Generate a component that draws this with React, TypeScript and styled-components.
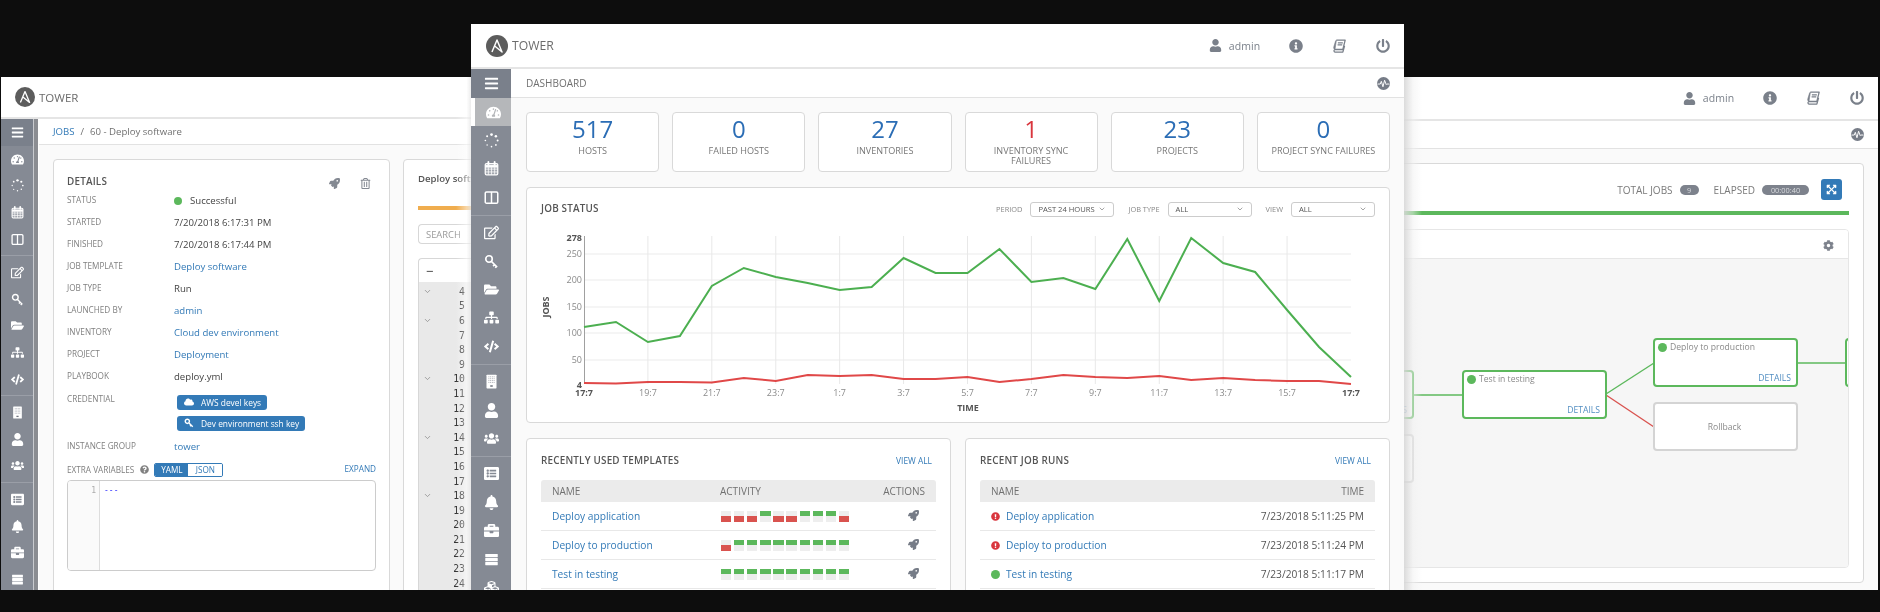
import React from 'react'
import styled, { createGlobalStyle } from 'styled-components'
import { ChevronDown } from 'lucide-react'
import {
  FaBars,
  FaBell,
  FaBriefcase,
  FaCloud,
  FaCode,
  FaCog,
  FaCubes,
  FaExclamationCircle,
  FaExpandArrowsAlt,
  FaFolderOpen,
  FaInfoCircle,
  FaListAlt,
  FaPowerOff,
  FaQuestionCircle,
  FaRegEdit,
  FaRegTrashAlt,
  FaRocket,
  FaSitemap,
  FaTachometerAlt,
  FaUser,
  FaUsers,
} from 'react-icons/fa'

const GlobalStyle = createGlobalStyle`
  html, body { margin: 0; padding: 0; background: #0d0d0d; }
  * { box-sizing: border-box; }
  body { font-family: "Open Sans", "Liberation Sans", sans-serif; }
`

const BLUE = '#337ab7'
const GREEN = '#5cb85c'
const RED = '#d9534f'

const Stage = styled.div`
  position: relative;
  width: 1880px;
  height: 612px;
  overflow: hidden;
  background: #0d0d0d;
  filter: blur(0.5px);
`

const Window = styled.section<{ $x: number; $y: number; $w: number; $h: number }>`
  position: absolute;
  left: ${(p) => p.$x}px;
  top: ${(p) => p.$y}px;
  width: ${(p) => p.$w}px;
  height: ${(p) => p.$h}px;
  overflow: hidden;
  display: flex;
  flex-direction: column;
  background: #fafafa;
`

const FadeLeft = styled.div`
  position: absolute;
  left: 456px;
  top: 77px;
  width: 15px;
  height: 513px;
  background: linear-gradient(to right, rgba(255, 255, 255, 0), rgba(255, 255, 255, 0.5) 70%, rgba(232, 232, 232, 0.8));
`

const FadeRight = styled.div`
  position: absolute;
  left: 1404px;
  top: 77px;
  width: 18px;
  height: 513px;
  background: linear-gradient(to right, rgba(215, 215, 215, 0.9), rgba(240, 240, 240, 0.5) 50%, rgba(255, 255, 255, 0));
`

const TopBar = styled.header<{ $h: number; $pad: number }>`
  flex: none;
  height: ${(p) => p.$h}px;
  display: flex;
  align-items: center;
  justify-content: space-between;
  padding: 0 14px 0 ${(p) => p.$pad}px;
  background: #fff;
  border-bottom: 2px solid #e5e5e5;
`

const Brand = styled.div<{ $size: number }>`
  display: flex;
  align-items: center;
  gap: 4px;
  font-size: ${(p) => p.$size}px;
  color: #6b6b6b;
`

const UserActions = styled.nav`
  display: flex;
  align-items: center;
  gap: 29px;
  color: #7a808a;
`

const UserName = styled.span`
  display: flex;
  align-items: center;
  gap: 7px;
  font-size: 10.5px;
  letter-spacing: 0.1px;
`

const ActionIcon = styled.span<{ $size: number }>`
  display: flex;
  font-size: ${(p) => p.$size}px;
`

const Body = styled.div`
  flex: 1;
  min-height: 0;
  display: flex;
`

const Sidebar = styled.aside<{ $w: number; $item: number; $icon: number }>`
  flex: none;
  width: ${(p) => p.$w}px;
  background: #858a94;
  color: #fff;
  font-size: ${(p) => p.$icon}px;
  --item: ${(p) => p.$item}px;
`

const MenuButton = styled.div<{ $h: number }>`
  height: ${(p) => p.$h}px;
  display: flex;
  align-items: center;
  justify-content: center;
  background: #7a808b;
`

const SideGroup = styled.div`
  padding-bottom: 3px;
  margin-bottom: 3px;
  border-bottom: 1px solid #9a9ea7;
  &:last-child {
    border-bottom: 0;
  }
`

const SideItem = styled.div<{ $active?: boolean }>`
  height: var(--item);
  display: flex;
  align-items: center;
  justify-content: center;
  background: ${(p) => (p.$active ? '#b5b7ba' : 'transparent')};
  border-left: ${(p) => (p.$active ? '4px solid #fff' : '0')};
`

const Rail = styled.div`
  flex: none;
  width: 6px;
  border-left: 1px solid #c9cbcf;
  border-right: 1px solid #fff;
  background: #8b8d92;
`

const Main = styled.main`
  flex: 1;
  min-width: 0;
  display: flex;
  flex-direction: column;
`

const CrumbBar = styled.div<{ $h: number; $pad: number }>`
  flex: none;
  height: ${(p) => p.$h}px;
  display: flex;
  align-items: center;
  justify-content: space-between;
  gap: 5px;
  padding: 0 14px 0 ${(p) => p.$pad}px;
  background: #fff;
  border-bottom: 1px solid #e2e2e2;
  font-size: 10px;
  color: #707070;
`

const Crumbs = styled.div`
  display: flex;
  gap: 6px;
  font-size: 9.6px;
`

const CrumbLink = styled.span`
  color: ${BLUE};
`

const Content = styled.div`
  flex: 1;
  min-height: 0;
  padding: 14px 14px 0 15px;
  display: flex;
  flex-direction: column;
  gap: 15px;
`

const Card = styled.div`
  background: #fff;
  border: 1px solid #d9d9d9;
  border-radius: 4px;
`

/* ---- icons drawn by hand ---- */

const AnsibleLogo = ({ size }: { size: number }) => (
  <svg width={size} height={size} viewBox="0 0 24 24">
    <circle cx="12" cy="12" r="12" fill="#5c5c5c" />
    <path d="M6.5 18.5 12 5.5l5.5 13-8-6.5" fill="none" stroke="#fff" strokeWidth="1.6" strokeLinejoin="round" />
  </svg>
)

const PulseIcon = ({ size }: { size: number }) => (
  <svg width={size} height={size} viewBox="0 0 24 24">
    <circle cx="12" cy="12" r="12" fill="#767c87" />
    <path d="M1 13h5l2-5 3 10 3-12 3 8 1-1h5" fill="none" stroke="#fff" strokeWidth="1.8" />
  </svg>
)

const BookIcon = () => (
  <svg width="1.05em" height="1em" viewBox="0 0 24 24" fill="none" stroke="currentColor">
    <path d="M7 2h15l-4 16H4.5a2.4 2.4 0 0 0 0 4.6H18l3-11" strokeWidth="2.2" strokeLinejoin="round" />
    <path d="M4.5 18C2 17 2 15 2.6 13L5.5 3.5C6 2.6 6.4 2 7 2z" fill="currentColor" strokeWidth="1" />
    <path d="M9.5 6.5h8.5M9 10h8" strokeWidth="2" />
  </svg>
)

const DotsIcon = () => (
  <svg width="1em" height="1em" viewBox="0 0 24 24" fill="#fff">
    <circle cx="12" cy="2.5" r="2.2" />
    <circle cx="19" cy="5" r="2" />
    <circle cx="21.8" cy="12" r="1.6" />
    <circle cx="19" cy="19" r="1.4" />
    <circle cx="12" cy="21.8" r="1.3" />
    <circle cx="5" cy="19" r="1.2" />
    <circle cx="2.2" cy="12" r="1.3" />
    <circle cx="5" cy="5" r="1.6" />
  </svg>
)

const CalendarIcon = () => (
  <svg width="1em" height="1em" viewBox="0 0 24 24" fill="none" stroke="#fff">
    <rect x="2" y="4" width="20" height="18" rx="2" fill="#fff" fillOpacity="0.25" strokeWidth="2" />
    <path d="M2 8.5h20" strokeWidth="4" />
    <path d="M7 1.5v4M17 1.5v4" strokeWidth="3" strokeLinecap="round" />
    <path d="M2 13h20M2 17.5h20M7 10v12M12 10v12M17 10v12" strokeWidth="1.2" />
  </svg>
)

const ColumnsIcon = () => (
  <svg width="1em" height="1em" viewBox="0 0 24 24" fill="none" stroke="#fff" strokeWidth="2.4">
    <rect x="2" y="3" width="20" height="18" rx="2" />
    <path d="M12 3v18" />
  </svg>
)

const KeyIcon = () => (
  <svg width="1em" height="1em" viewBox="0 0 24 24" fill="none" stroke="#fff" strokeWidth="2.6">
    <circle cx="8" cy="8" r="5.2" />
    <path d="M12 12l9 9M17 17l-2.5 2.5M20 20l-2 2" />
  </svg>
)

const InventoryIcon = () => (
  <svg width="1em" height="1em" viewBox="0 0 24 24">
    <rect x="4" y="1" width="16" height="22" rx="1" fill="#fff" />
    <path d="M7 4.5h10M7 7.5h10M7 10.5h10M7 13.5h10" stroke="#b0b3b9" strokeWidth="1.6" strokeDasharray="1.6 1.2" />
    <rect x="10" y="18" width="4" height="2.4" fill="#6f747e" />
  </svg>
)

const SmallKeyIcon = () => (
  <svg width="10" height="10" viewBox="0 0 24 24" fill="none" stroke="#fff" strokeWidth="3.4">
    <circle cx="8" cy="8" r="5" />
    <path d="M12 12l9 9M17 17l-2.5 2.5" />
  </svg>
)

const ServerIcon = () => (
  <svg width="1em" height="1em" viewBox="0 0 24 24" fill="#fff">
    <rect x="2" y="3" width="20" height="5.2" rx="0.6" />
    <rect x="2" y="9.4" width="20" height="5.2" rx="0.6" />
    <rect x="2" y="15.8" width="20" height="5.2" rx="0.6" />
  </svg>
)

const sideGroups: React.ReactNode[][] = [
  [<FaTachometerAlt />, <DotsIcon />, <CalendarIcon />, <ColumnsIcon />],
  [<FaRegEdit />, <KeyIcon />, <FaFolderOpen />, <FaSitemap />, <FaCode />],
  [<InventoryIcon />, <FaUser />, <FaUsers />],
  [<FaListAlt />, <FaBell />, <FaBriefcase />, <ServerIcon />, <FaCubes />],
]

const SideNav = ({
  w,
  item,
  icon,
  menu,
  activeFirst,
}: {
  w: number
  item: number
  icon: number
  menu: number
  activeFirst?: boolean
}) => (
  <Sidebar $w={w} $item={item} $icon={icon}>
    <MenuButton $h={menu}>
      <FaBars />
    </MenuButton>
    {sideGroups.map((group, g) => (
      <SideGroup key={g}>
        {group.map((glyph, i) => (
          <SideItem key={i} $active={activeFirst && g === 0 && i === 0}>
            {glyph}
          </SideItem>
        ))}
      </SideGroup>
    ))}
  </Sidebar>
)

const Header = ({ h, logo, brand, pad, icon }: { h: number; logo: number; brand: number; pad: number; icon: number }) => (
  <TopBar $h={h} $pad={pad}>
    <Brand $size={brand}>
      <AnsibleLogo size={logo} />
      TOWER
    </Brand>
    <UserActions>
      <UserName>
        <FaUser size={icon - 1} />
        admin
      </UserName>
      <ActionIcon $size={icon}>
        <FaInfoCircle />
      </ActionIcon>
      <ActionIcon $size={icon}>
        <BookIcon />
      </ActionIcon>
      <ActionIcon $size={icon}>
        <FaPowerOff />
      </ActionIcon>
    </UserActions>
  </TopBar>
)

/* ---- job details window ---- */

const DetailColumns = styled.div`
  flex: 1;
  min-height: 0;
  display: flex;
  gap: 13px;
  padding: 14px 0 0 14px;
`

const DetailsCard = styled(Card)`
  flex: none;
  width: 337px;
  height: 480px;
  padding: 13px 13px 0 13px;
`

const DetailsHead = styled.div`
  height: 16.5px;
  display: flex;
  align-items: center;
  justify-content: space-between;
  padding-right: 5px;
`

const Title = styled.h3`
  margin: 0;
  font-size: 9.9px;
  font-weight: 600;
  color: #555;
  letter-spacing: 0.2px;
`

const HeadIcons = styled.div`
  display: flex;
  align-items: center;
  gap: 20px;
  padding-top: 4px;
  font-size: 11px;
  color: #848992;
`

const DetailRow = styled.div`
  height: 22px;
  display: grid;
  grid-template-columns: 107px 1fr;
  align-items: center;
`

const DetailLabel = styled.span`
  font-size: 8.2px;
  color: #808080;
  padding-bottom: 2px;
`

const DetailValue = styled.span<{ $link?: boolean }>`
  display: flex;
  align-items: center;
  gap: 8px;
  font-size: 9.6px;
  color: ${(p) => (p.$link ? BLUE : '#444')};
`

const StatusDot = styled.i<{ $size?: number }>`
  flex: none;
  width: ${(p) => p.$size ?? 8}px;
  height: ${(p) => p.$size ?? 8}px;
  border-radius: 50%;
  background: ${GREEN};
`

const CredentialRow = styled.div`
  display: grid;
  grid-template-columns: 107px 1fr;
  align-items: start;
  padding: 7px 0 5px;
`

const CredentialLabel = styled(DetailLabel)`
  padding: 0;
  margin-top: -2px;
`

const Pills = styled.div`
  display: flex;
  flex-direction: column;
  align-items: flex-start;
  gap: 6px;
  padding-left: 3px;
`

const Pill = styled.span`
  height: 15px;
  display: flex;
  align-items: center;
  gap: 7px;
  padding: 0 6px 0 7px;
  border-radius: 3px;
  background: ${BLUE};
  color: #fff;
  font-size: 8.4px;
`

const ExtraRow = styled.div`
  height: 14px;
  margin-top: 5px;
  display: flex;
  align-items: center;
  font-size: 8.2px;
  color: #808080;
`

const HelpIcon = styled(FaQuestionCircle)`
  margin: 0 5px 0 6px;
  font-size: 9px;
`

const Toggle = styled.div`
  display: flex;
  height: 14px;
  border: 1px solid ${BLUE};
  border-radius: 2px;
  overflow: hidden;
`

const ToggleOption = styled.span<{ $on?: boolean }>`
  width: ${(p) => (p.$on ? 33 : 34)}px;
  display: flex;
  align-items: center;
  justify-content: center;
  font-size: 8.2px;
  background: ${(p) => (p.$on ? BLUE : '#fff')};
  color: ${(p) => (p.$on ? '#fff' : BLUE)};
`

const Expand = styled.span`
  margin-left: auto;
  padding-bottom: 3px;
  color: ${BLUE};
`

const Editor = styled.div`
  height: 91px;
  margin-top: 3px;
  display: flex;
  border: 1px solid #ccc;
  border-radius: 4px;
  overflow: hidden;
  font-family: "DejaVu Sans Mono", monospace;
  font-size: 8px;
`

const EditorGutter = styled.div`
  width: 32px;
  padding: 5px 3px 0 0;
  text-align: right;
  color: #aaa;
  background: #fafafa;
  border-right: 1px solid #ddd;
`

const EditorCode = styled.div`
  padding: 5px 0 0 4px;
  color: #2a2aff;
`

const OutputCard = styled(Card)`
  flex: 1;
  height: 480px;
  padding: 12px 0 0 14px;
`

const OutputTitle = styled.div`
  height: 14px;
  font-size: 9.6px;
  font-weight: 600;
  color: #555;
  white-space: nowrap;
`

const ProgressBar = styled.div<{ $color: string }>`
  height: 4px;
  background: ${(p) => p.$color};
`

const OrangeBar = styled(ProgressBar)`
  margin: 20px 0 14px;
`

const SearchBox = styled.div`
  height: 20px;
  display: flex;
  align-items: center;
  padding-left: 7px;
  border: 1px solid #d7d7d7;
  border-radius: 4px 0 0 4px;
  border-right: 0;
  font-size: 9.4px;
  color: #9a9a9a;
`

const CodeBox = styled.div`
  margin-top: 14px;
  border: 1px solid #d7d7d7;
  border-right: 0;
  border-radius: 4px 0 0 0;
`

const CodeHead = styled.div`
  height: 23px;
  display: flex;
  align-items: center;
  padding-left: 7px;
  font-size: 13px;
  font-weight: 600;
  color: #666;
`

const CodeLines = styled.div`
  padding-top: 2px;
  background: #e9e9e9;
`

const CodeLine = styled.div`
  height: 14.6px;
  display: grid;
  grid-template-columns: 17px 29px;
  align-items: center;
  font-family: "DejaVu Sans Mono", monospace;
  font-size: 9.8px;
  color: #333;
  text-align: right;
  svg {
    margin-left: 4px;
    color: #888;
  }
`

const JobWindow = () => {
  const rows: [string, string, boolean?][] = [
    ['STARTED', '7/20/2018 6:17:31 PM'],
    ['FINISHED', '7/20/2018 6:17:44 PM'],
    ['JOB TEMPLATE', 'Deploy software', true],
    ['JOB TYPE', 'Run'],
    ['LAUNCHED BY', 'admin', true],
    ['INVENTORY', 'Cloud dev environment', true],
    ['PROJECT', 'Deployment', true],
    ['PLAYBOOK', 'deploy.yml'],
  ]
  const lines = Array.from({ length: 21 }, (_, i) => i + 4)
  const folds = [4, 6, 10, 14, 18]
  return (
    <Window $x={1} $y={77} $w={934} $h={513}>
      <Header h={42} logo={20} brand={11.5} pad={14} icon={13} />
      <Body>
        <SideNav w={32} item={26.6} icon={13} menu={27} />
        <Rail />
        <Main>
          <CrumbBar $h={26} $pad={14}>
            <Crumbs>
              <CrumbLink>JOBS</CrumbLink>
              <span>/</span>
              <span>60 - Deploy software</span>
            </Crumbs>
          </CrumbBar>
          <DetailColumns>
            <DetailsCard>
              <DetailsHead>
                <Title>DETAILS</Title>
                <HeadIcons>
                  <FaRocket />
                  <FaRegTrashAlt />
                </HeadIcons>
              </DetailsHead>
              <DetailRow>
                <DetailLabel>STATUS</DetailLabel>
                <DetailValue>
                  <StatusDot />
                  Successful
                </DetailValue>
              </DetailRow>
              {rows.map(([label, value, link]) => (
                <DetailRow key={label}>
                  <DetailLabel>{label}</DetailLabel>
                  <DetailValue $link={link}>{value}</DetailValue>
                </DetailRow>
              ))}
              <CredentialRow>
                <CredentialLabel>CREDENTIAL</CredentialLabel>
                <Pills>
                  <Pill>
                    <FaCloud size={10} />
                    AWS devel keys
                  </Pill>
                  <Pill>
                    <SmallKeyIcon />
                    Dev environment ssh key
                  </Pill>
                </Pills>
              </CredentialRow>
              <DetailRow>
                <DetailLabel>INSTANCE GROUP</DetailLabel>
                <DetailValue $link>tower</DetailValue>
              </DetailRow>
              <ExtraRow>
                EXTRA VARIABLES
                <HelpIcon />
                <Toggle>
                  <ToggleOption $on>YAML</ToggleOption>
                  <ToggleOption>JSON</ToggleOption>
                </Toggle>
                <Expand>EXPAND</Expand>
              </ExtraRow>
              <Editor>
                <EditorGutter>1</EditorGutter>
                <EditorCode>---</EditorCode>
              </Editor>
            </DetailsCard>
            <OutputCard>
              <OutputTitle>Deploy software</OutputTitle>
              <OrangeBar $color="#f0ad4e" />
              <SearchBox>SEARCH</SearchBox>
              <CodeBox>
                <CodeHead>−</CodeHead>
                <CodeLines>
                  {lines.map((n) => (
                    <CodeLine key={n}>
                      {folds.includes(n) ? <ChevronDown size={9} /> : <span />}
                      <span>{n}</span>
                    </CodeLine>
                  ))}
                </CodeLines>
              </CodeBox>
            </OutputCard>
          </DetailColumns>
        </Main>
      </Body>
    </Window>
  )
}

/* ---- workflow window ---- */

const WorkflowPanel = styled(Card)`
  height: 420px;
  padding: 0 14px 0 15px;
  display: flex;
  flex-direction: column;
`

const WorkflowTop = styled.div`
  flex: none;
  height: 47px;
  display: flex;
  align-items: center;
  justify-content: flex-end;
  gap: 15px;
  padding: 4px 7px 0 0;
  font-size: 10px;
  color: #7a7a7a;
`

const Counter = styled.span`
  display: flex;
  align-items: center;
  gap: 7px;
`

const Badge = styled.span<{ $w: number }>`
  width: ${(p) => p.$w}px;
  height: 10px;
  display: flex;
  align-items: center;
  justify-content: center;
  border-radius: 5px;
  background: #7d828c;
  color: #d8dade;
  font-size: 7.4px;
`

const FullscreenButton = styled.span`
  width: 21px;
  height: 21px;
  margin-left: -3px;
  display: flex;
  align-items: center;
  justify-content: center;
  border-radius: 3px;
  background: ${BLUE};
  color: #fff;
  font-size: 11px;
`

const GraphPanel = styled.div`
  flex: none;
  height: 339px;
  margin-top: 14px;
  display: flex;
  flex-direction: column;
  border: 1px solid #e6e6e6;
  border-radius: 4px;
  overflow: hidden;
`

const GraphToolbar = styled.div`
  flex: none;
  height: 29px;
  display: flex;
  align-items: center;
  justify-content: flex-end;
  padding: 2px 14px 0 0;
  background: #fff;
  border-bottom: 1px solid #e6e6e6;
  color: #7d828c;
  font-size: 11px;
`

const GraphCanvas = styled.div`
  position: relative;
  flex: 1;
  background: #f6f6f6;
  overflow: hidden;
`

const GraphEdges = styled.svg`
  position: absolute;
  left: 0;
  top: 0;
  width: 100%;
  height: 100%;
`

const NodeBox = styled.div<{ $x: number; $y: number; $ok?: boolean }>`
  position: absolute;
  left: ${(p) => p.$x}px;
  top: ${(p) => p.$y}px;
  width: 145px;
  height: 49px;
  padding: 1px 5px 1px 3px;
  display: flex;
  flex-direction: column;
  justify-content: space-between;
  background: #fff;
  border: 2px solid ${(p) => (p.$ok ? GREEN : '#d4d4d4')};
  border-radius: 4px;
  font-size: 8.6px;
  color: #8a8a8a;
`

const NodeName = styled.span`
  display: flex;
  align-items: center;
  gap: 3px;
`

const NodeDetails = styled.span`
  align-self: flex-end;
  color: ${BLUE};
  opacity: 0.85;
`

const NodeCenter = styled.span`
  margin: auto;
`

const WorkflowWindow = () => (
  <Window $x={945} $y={77} $w={933} $h={513}>
    <Header h={44} logo={20} brand={11.5} pad={14} icon={14} />
    <Main>
      <CrumbBar $h={28} $pad={15}>
        <span />
        <PulseIcon size={13} />
      </CrumbBar>
      <Content>
        <WorkflowPanel>
          <WorkflowTop>
            <Counter>
              TOTAL JOBS <Badge $w={19}>9</Badge>
            </Counter>
            <Counter>
              ELAPSED <Badge $w={47}>00:00:40</Badge>
            </Counter>
            <FullscreenButton>
              <FaExpandArrowsAlt />
            </FullscreenButton>
          </WorkflowTop>
          <ProgressBar $color={GREEN} />
          <GraphPanel>
            <GraphToolbar>
              <FaCog />
            </GraphToolbar>
            <GraphCanvas>
              <GraphEdges>
                <line x1="436" y1="136" x2="486" y2="136" stroke={GREEN} strokeWidth="1.4" />
                <line x1="629" y1="135" x2="677" y2="104" stroke={GREEN} strokeWidth="1.4" />
                <line x1="629" y1="136" x2="677" y2="168" stroke={RED} strokeWidth="1.4" />
                <line x1="820" y1="104" x2="869" y2="104" stroke={GREEN} strokeWidth="1.4" />
              </GraphEdges>
              <NodeBox $x={292} $y={111} $ok>
                <NodeName>
                  <StatusDot $size={9} />
                  Build software
                </NodeName>
                <NodeDetails>DETAILS</NodeDetails>
              </NodeBox>
              <NodeBox $x={292} $y={175}>
                <NodeCenter>Notify</NodeCenter>
              </NodeBox>
              <NodeBox $x={485} $y={111} $ok>
                <NodeName>
                  <StatusDot $size={9} />
                  Test in testing
                </NodeName>
                <NodeDetails>DETAILS</NodeDetails>
              </NodeBox>
              <NodeBox $x={676} $y={79} $ok>
                <NodeName>
                  <StatusDot $size={9} />
                  Deploy to production
                </NodeName>
                <NodeDetails>DETAILS</NodeDetails>
              </NodeBox>
              <NodeBox $x={676} $y={143}>
                <NodeCenter>Rollback</NodeCenter>
              </NodeBox>
              <NodeBox $x={868} $y={79} $ok />
            </GraphCanvas>
          </GraphPanel>
        </WorkflowPanel>
      </Content>
    </Main>
  </Window>
)

/* ---- dashboard window ---- */

const CountGrid = styled.div`
  display: grid;
  grid-template-columns: repeat(6, 1fr);
  gap: 13px;
`

const CountCard = styled(Card)`
  height: 60px;
  padding: 1px 12px 0;
  text-align: center;
`

const CountNumber = styled.div<{ $alert?: boolean }>`
  font-size: 24px;
  line-height: 30px;
  color: ${(p) => (p.$alert ? '#d9363e' : '#2b6db5')};
`

const CountLabel = styled.div`
  margin-top: 2px;
  font-size: 9.1px;
  line-height: 10px;
  color: #777;
`

const ChartCard = styled(Card)`
  height: 239px;
  padding: 13px 14px 0;
`

const CardHead = styled.div`
  height: 16px;
  display: flex;
  align-items: center;
  justify-content: space-between;
`

const ChartTitle = styled(Title)`
  padding-bottom: 2px;
`

const Filters = styled.div`
  display: flex;
  align-items: center;
  gap: 14px;
`

const FilterField = styled.label`
  display: flex;
  align-items: center;
  gap: 8px;
  font-size: 7.4px;
  color: #888;
`

const SelectBox = styled.span`
  width: 84px;
  height: 15px;
  display: flex;
  align-items: center;
  justify-content: space-between;
  padding: 0 7px;
  border: 1px solid #ccc;
  border-radius: 3px;
  font-size: 7.6px;
  color: #555;
  svg {
    color: #777;
  }
`

const ChartSvg = styled.svg`
  display: block;
  margin-top: 15px;
  text {
    font-family: "Open Sans", "Liberation Sans", sans-serif;
    font-size: 9px;
    fill: #8a8a8a;
  }
  .strong {
    font-weight: 700;
    fill: #555;
  }
`

const greenY = [
  327, 322, 342, 336, 286, 268, 277, 283, 290, 287, 258, 273, 273, 249, 282, 278, 289, 239, 301, 238, 263, 272, 310,
  347, 377,
]
const redY = [
  383, 383.5, 382, 382, 382.5, 378, 381, 375, 376, 375, 379, 379, 377, 382, 379, 375, 377, 378, 376, 380, 378, 380, 381,
  381, 384,
]
const chartX = (i: number) => 584 + (i * 767) / 24
const toPoints = (ys: number[]) => ys.map((y, i) => `${chartX(i)},${y}`).join(' ')
const hourLabels = ['17:7', '19:7', '21:7', '23:7', '1:7', '3:7', '5:7', '7:7', '9:7', '11:7', '13:7', '15:7', '17:7']
const yTicks: [string, number][] = [
  ['250', 254],
  ['200', 280],
  ['150', 307],
  ['100', 333],
  ['50', 360],
]

// page coordinates of the chart's top left corner
const CHART_LEFT = 541
const CHART_TOP = 232

const JobChart = () => (
  <ChartSvg width={836} height={190} viewBox={`${CHART_LEFT} ${CHART_TOP} 836 190`}>
    {yTicks.map(([label, y]) => (
      <g key={label}>
        <line x1={584} x2={1351} y1={y} y2={y} stroke="#ececec" strokeWidth="1.2" />
        <text x={582} y={y + 3} textAnchor="end">
          {label}
        </text>
      </g>
    ))}
    {hourLabels.map((label, i) => {
      const x = chartX(i * 2)
      const edge = i === 0 || i === hourLabels.length - 1
      return (
        <g key={i}>
          {i > 0 && i < 12 && <line x1={x} x2={x} y1={236} y2={384} stroke="#e8e8e8" />}
          <text x={x} y={396} textAnchor="middle" className={edge ? 'strong' : undefined}>
            {label}
          </text>
        </g>
      )
    })}
    <line x1={584.5} x2={584.5} y1={236} y2={384} stroke="#a0a0a0" />
    <text x={582} y={241} textAnchor="end" className="strong">
      278
    </text>
    <text x={582} y={388} textAnchor="end" className="strong">
      4
    </text>
    <text x={968} y={411} textAnchor="middle" className="strong">
      TIME
    </text>
    <text transform="translate(549 307) rotate(-90)" textAnchor="middle" className="strong">
      JOBS
    </text>
    <polyline points={toPoints(greenY)} fill="none" stroke="#4caf50" strokeWidth="2" />
    <polyline points={toPoints(redY)} fill="none" stroke="#e04848" strokeWidth="2" />
  </ChartSvg>
)

const ListGrid = styled.div`
  display: grid;
  grid-template-columns: 1fr 1fr;
  gap: 14px;
`

const ListCard = styled(Card)`
  height: 200px;
  padding: 13px 14px 0;
`

const ViewAll = styled.span`
  padding-right: 4px;
  font-size: 8.4px;
  color: ${BLUE};
`

const Table = styled.div`
  margin-top: 12px;
`

const TableRow = styled.div<{ $cols: string; $head?: boolean }>`
  height: ${(p) => (p.$head ? 22 : 29)}px;
  display: grid;
  grid-template-columns: ${(p) => p.$cols};
  align-items: center;
  padding: 0 11px;
  background: ${(p) => (p.$head ? '#ebebeb' : 'transparent')};
  border-radius: ${(p) => (p.$head ? '3px 3px 0 0' : '0')};
  border-bottom: ${(p) => (p.$head ? '0' : '1px solid #e8e8e8')};
  font-size: ${(p) => (p.$head ? '10px' : '10.2px')};
  color: ${(p) => (p.$head ? '#707070' : '#555')};
`

const RightCell = styled.span`
  text-align: right;
`

const ActionCell = styled(RightCell)`
  padding-right: 6px;
  font-size: 11px;
  color: #767c87;
`

const RowLink = styled.span`
  display: flex;
  align-items: center;
  gap: 6px;
  color: ${BLUE};
`

const ActivityBars = styled.div`
  display: flex;
  gap: 2.8px;
  padding-left: 1px;
`

const ActivityCell = styled.i<{ $state: 'ok' | 'fail' }>`
  width: 10.3px;
  height: 11px;
  display: block;
  background: linear-gradient(
    ${(p) => (p.$state === 'ok' ? `${GREEN} 0 5.5px, #eee 5.5px 11px` : `#eee 0 5.5px, ${RED} 5.5px 11px`)}
  );
`

const FailIcon = styled(FaExclamationCircle)`
  flex: none;
  font-size: 9px;
  color: #d9363e;
`

const templates = [
  { name: 'Deploy application', jobs: 'fffoffooof' },
  { name: 'Deploy to production', jobs: 'fooooooooo' },
  { name: 'Test in testing', jobs: 'oooooooooo' },
]

const runs = [
  { name: 'Deploy application', time: '7/23/2018 5:11:25 PM', failed: true },
  { name: 'Deploy to production', time: '7/23/2018 5:11:24 PM', failed: true },
  { name: 'Test in testing', time: '7/23/2018 5:11:17 PM', failed: false },
]

const TEMPLATE_COLS = '168px 1fr auto'
const RUN_COLS = '1fr auto'

const counts: { value: string; label: string; alert?: boolean }[] = [
  { value: '517', label: 'HOSTS' },
  { value: '0', label: 'FAILED HOSTS' },
  { value: '27', label: 'INVENTORIES' },
  { value: '1', label: 'INVENTORY SYNC FAILURES', alert: true },
  { value: '23', label: 'PROJECTS' },
  { value: '0', label: 'PROJECT SYNC FAILURES' },
]

const filters = [
  { label: 'PERIOD', value: 'PAST 24 HOURS' },
  { label: 'JOB TYPE', value: 'ALL' },
  { label: 'VIEW', value: 'ALL' },
]

const DashboardWindow = () => (
  <Window $x={471} $y={24} $w={933} $h={566}>
    <Header h={45} logo={22} brand={12.2} pad={15} icon={14} />
    <Body>
      <SideNav w={40} item={28.4} icon={15} menu={29} activeFirst />
      <Main>
        <CrumbBar $h={29} $pad={15}>
          DASHBOARD
          <PulseIcon size={13} />
        </CrumbBar>
        <Content>
          <CountGrid>
            {counts.map((c) => (
              <CountCard key={c.label}>
                <CountNumber $alert={c.alert}>{c.value}</CountNumber>
                <CountLabel>{c.label}</CountLabel>
              </CountCard>
            ))}
          </CountGrid>
          <ChartCard>
            <CardHead>
              <ChartTitle>JOB STATUS</ChartTitle>
              <Filters>
                {filters.map((f) => (
                  <FilterField key={f.label}>
                    {f.label}
                    <SelectBox>
                      {f.value}
                      <ChevronDown size={8} />
                    </SelectBox>
                  </FilterField>
                ))}
              </Filters>
            </CardHead>
            <JobChart />
          </ChartCard>
          <ListGrid>
            <ListCard>
              <CardHead>
                <Title>RECENTLY USED TEMPLATES</Title>
                <ViewAll>VIEW ALL</ViewAll>
              </CardHead>
              <Table>
                <TableRow $head $cols={TEMPLATE_COLS}>
                  <span>NAME</span>
                  <span>ACTIVITY</span>
                  <RightCell>ACTIONS</RightCell>
                </TableRow>
                {templates.map((t) => (
                  <TableRow key={t.name} $cols={TEMPLATE_COLS}>
                    <RowLink>{t.name}</RowLink>
                    <ActivityBars>
                      {t.jobs.split('').map((s, i) => (
                        <ActivityCell key={i} $state={s === 'o' ? 'ok' : 'fail'} />
                      ))}
                    </ActivityBars>
                    <ActionCell>
                      <FaRocket />
                    </ActionCell>
                  </TableRow>
                ))}
              </Table>
            </ListCard>
            <ListCard>
              <CardHead>
                <Title>RECENT JOB RUNS</Title>
                <ViewAll>VIEW ALL</ViewAll>
              </CardHead>
              <Table>
                <TableRow $head $cols={RUN_COLS}>
                  <span>NAME</span>
                  <RightCell>TIME</RightCell>
                </TableRow>
                {runs.map((r) => (
                  <TableRow key={r.name} $cols={RUN_COLS}>
                    <RowLink>
                      {r.failed ? <FailIcon /> : <StatusDot $size={9} />}
                      {r.name}
                    </RowLink>
                    <RightCell>{r.time}</RightCell>
                  </TableRow>
                ))}
              </Table>
            </ListCard>
          </ListGrid>
        </Content>
      </Main>
    </Body>
  </Window>
)

export default function App() {
  return (
    <>
      <GlobalStyle />
      <Stage>
        <JobWindow />
        <WorkflowWindow />
        <FadeLeft />
        <FadeRight />
        <DashboardWindow />
      </Stage>
    </>
  )
}
